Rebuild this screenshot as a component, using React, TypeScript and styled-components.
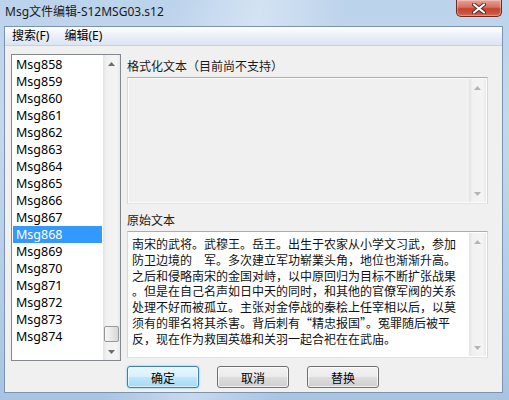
import React from "react";
import styled, { createGlobalStyle, css } from "styled-components";

const GlobalStyle = createGlobalStyle`
    html, body
    {
        margin: 0;
        padding: 0;
        background: #b9d1ea;
    }
    body
    {
        font-family: "Noto Sans", "Noto Sans CJK SC", sans-serif;
        font-size: 12px;
        color: #000;
    }
`;

const UI_FONT = `"Noto Sans", "Noto Sans CJK SC", sans-serif`;
const CJK_FONT = `"Noto Sans CJK SC", "Noto Sans", sans-serif`;

const messages : string[] = [];
for (let i = 858; i <= 874; i++)
{
    messages.push(`Msg${i}`);
}
const SELECTED = "Msg868";

const originalLines = [
    "南宋的武将。武穆王。岳王。出生于农家从小学文习武，参加",
    "防卫边境的　军。多次建立军功崭業头角，地位也渐渐升高。",
    "之后和侵略南宋的金国对峙，以中原回归为目标不断扩张战果",
    "。但是在自己名声如日中天的同时，和其他的官僚军阀的关系",
    "处理不好而被孤立。主张对金停战的秦桧上任宰相以后，以莫",
    "须有的罪名将其杀害。背后刺有“精忠报国”。冤罪随后被平",
    "反，现在作为救国英雄和关羽一起合祀在在武庙。",
];

function Arrow({ dir, light } : { dir : "up" | "down", light? : boolean })
{
    const color = light ? "#b4b4b4" : "#6d6d6d";
    return (
        <svg width="7" height="4" viewBox="0 0 7 4">
            {dir === "up"
                ? <polygon points="3.5,0 7,4 0,4" fill={color}/>
                : <polygon points="0,0 7,0 3.5,4" fill={color}/>}
        </svg>
    );
}

function ScrollBar({ thumb, light } : { thumb? : boolean, light? : boolean })
{
    return (
        <Bar>
            <BarButton><Arrow dir="up" light={light}/></BarButton>
            <Track>{thumb && <Thumb/>}</Track>
            <BarButton><Arrow dir="down" light={light}/></BarButton>
        </Bar>
    );
}

export default function App()
{
    return (
        <>
            <GlobalStyle/>
            <Window>
                <TitleBar>
                    <Title>Msg文件编辑-S12MSG03.s12</Title>
                    <CloseButton>
                        <svg width="14" height="11" viewBox="0 0 14 11">
                            <path d="M2 1.5 L12 9.5 M12 1.5 L2 9.5" stroke="#4a2a2a" strokeWidth="4" strokeLinecap="round"/>
                            <path d="M2 1.5 L12 9.5 M12 1.5 L2 9.5" stroke="#ffffff" strokeWidth="2.2" strokeLinecap="round"/>
                        </svg>
                    </CloseButton>
                </TitleBar>

                <Client>
                    <MenuBar>
                        <MenuItem>搜索(F)</MenuItem>
                        <MenuItem>编辑(E)</MenuItem>
                    </MenuBar>

                    <Body>
                        <ListBox>
                            <ListItems>
                                {messages.map(m => (
                                    <ListItem key={m} $selected={m === SELECTED}>{m}</ListItem>
                                ))}
                            </ListItems>
                            <ScrollBar thumb/>
                        </ListBox>

                        <RightColumn>
                            <Label>格式化文本（目前尚不支持）</Label>
                            <TextBox $disabled>
                                <TextContent/>
                                <ScrollBar light/>
                            </TextBox>

                            <Label $spaced>原始文本</Label>
                            <TextBox>
                                <TextContent>
                                    {originalLines.map((line, i) => <Line key={i}>{line}</Line>)}
                                </TextContent>
                                <ScrollBar light/>
                            </TextBox>

                            <Buttons>
                                <Button $default>确定</Button>
                                <Button>取消</Button>
                                <Button>替换</Button>
                            </Buttons>
                        </RightColumn>
                    </Body>
                </Client>
            </Window>
        </>
    );
}

const Window = styled.div`
    width: 509px;
    height: 400px;
    display: flex;
    flex-direction: column;
    overflow: hidden;
    background:
        linear-gradient(100deg, rgba(255,255,255,0) 30%, rgba(255,255,255,0.35) 45%, rgba(255,255,255,0) 60%),
        linear-gradient(to bottom, #bcd3ec 0%, #c4d9ef 30%, #a9c4e3 100%);
`;

const TitleBar = styled.div`
    height: 26px;
    display: flex;
    align-items: flex-start;
    padding-left: 5px;
`;

const Title = styled.div`
    font-family: ${UI_FONT};
    font-size: 12px;
    line-height: 16px;
    margin-top: 4px;
    color: #1a1a1a;
    flex: 1;
`;

const CloseButton = styled.div`
    width: 44px;
    height: 16px;
    margin-right: 7px;
    display: flex;
    align-items: center;
    justify-content: center;
    border: 1px solid #6b2a22;
    border-top: none;
    border-radius: 0 0 5px 5px;
    background: linear-gradient(to bottom, #e8a093 0%, #d7705f 45%, #c4422c 55%, #d0624d 100%);
    box-shadow: inset 0 0 1px 1px rgba(255,255,255,0.35);
`;

const Client = styled.div`
    flex: 1;
    margin: 0 6px 7px 4px;
    display: flex;
    flex-direction: column;
    background: #f0f0f0;
    border: 1px solid #7c93ad;
`;

const MenuBar = styled.div`
    height: 18px;
    display: flex;
    align-items: center;
    padding-left: 7px;
    gap: 15px;
    background: linear-gradient(to bottom, #ffffff 0%, #eef2fa 40%, #dce4f3 100%);
    border-bottom: 1px solid #c6d0e2;
`;

const MenuItem = styled.span`
    font-family: ${UI_FONT};
    font-size: 12px;
    line-height: 16px;
`;

const Body = styled.div`
    flex: 1;
    display: flex;
    gap: 6px;
    padding: 8px 14px 0 6px;
`;

const ListBox = styled.div`
    width: 110px;
    height: 307px;
    box-sizing: border-box;
    border: 1px solid #828790;
    background: #fff;
    display: flex;
`;

const ListItems = styled.div`
    flex: 1;
    padding: 1px 1px 0 1px;
    overflow: hidden;
`;

const ListItem = styled.div<{ $selected? : boolean }>`
    height: 17px;
    line-height: 17px;
    padding-left: 3px;
    font-family: ${UI_FONT};
    font-size: 12.5px;
    color: #000;
    ${props => props.$selected && css`
        background: #3399ff;
        color: #fff;
    `}
`;

const Bar = styled.div`
    width: 17px;
    display: flex;
    flex-direction: column;
    background: linear-gradient(to right, #e2e2e2 0%, #f1f1f1 20%, #f4f4f4 80%, #e9e9e9 100%);
`;

const BarButton = styled.div`
    height: 17px;
    display: flex;
    align-items: center;
    justify-content: center;
`;

const Track = styled.div`
    flex: 1;
    display: flex;
    flex-direction: column;
    justify-content: flex-end;
    align-items: center;
`;

const Thumb = styled.div`
    width: 15px;
    height: 16px;
    margin-bottom: 1px;
    box-sizing: border-box;
    border: 1px solid #979797;
    border-radius: 2px;
    background: linear-gradient(to right, #f6f6f6 0%, #e8e8e8 50%, #d6d6d6 100%);
`;

const RightColumn = styled.div`
    flex: 1;
    display: flex;
    flex-direction: column;
`;

const Label = styled.div<{ $spaced? : boolean }>`
    font-family: ${CJK_FONT};
    font-size: 12px;
    line-height: 16px;
    margin: ${props => props.$spaced ? "8px 0 3px 0" : "4px 0 3px 0"};
    color: #1a1a1a;
`;

const TextBox = styled.div<{ $disabled? : boolean }>`
    height: 127px;
    box-sizing: border-box;
    display: flex;
    border: 1px solid #abadb3;
    border-left-color: #d5d8e0;
    border-right-color: #d5d8e0;
    border-bottom-color: #dfe3ea;
    background: ${props => props.$disabled ? "#f0f0f0" : "#ffffff"};
    box-shadow: inset 0 0 0 1px ${props => props.$disabled ? "#fbfbfb" : "#ffffff"};
    padding: 1px;
`;

const TextContent = styled.div`
    flex: 1;
    padding: 3px 0 0 3px;
    overflow: hidden;
`;

const Line = styled.div`
    font-family: ${CJK_FONT};
    font-size: 12px;
    line-height: 15.8px;
    white-space: nowrap;
    color: #111;
`;

const Buttons = styled.div`
    display: flex;
    gap: 18px;
    margin-top: 8px;
`;

const Button = styled.div<{ $default? : boolean }>`
    width: 72px;
    height: 22px;
    box-sizing: border-box;
    display: flex;
    align-items: center;
    justify-content: center;
    font-family: ${CJK_FONT};
    font-size: 12px;
    border-radius: 3px;
    border: 1px solid #707070;
    background: linear-gradient(to bottom, #f2f2f2 0%, #ebebeb 48%, #dddddd 52%, #cfcfcf 100%);
    box-shadow: inset 0 0 0 1px rgba(255,255,255,0.7);
    ${props => props.$default && css`
        border-color: #3c7fb1;
        background: linear-gradient(to bottom, #eaf6fd 0%, #d9f0fc 48%, #bee6fd 52%, #a7d9f5 100%);
        box-shadow: inset 0 0 0 1px rgba(255,255,255,0.6), 0 0 2px #48c6f7;
    `}
`;
